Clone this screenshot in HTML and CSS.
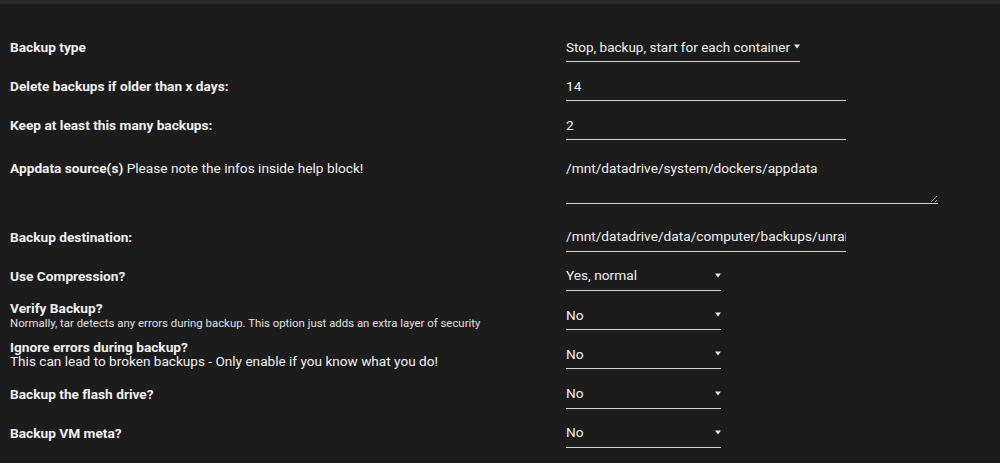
FILE: index.html
```html
<!DOCTYPE html>
<html lang="en">
<head>
    <meta charset="UTF-8">
    <meta name="viewport" content="width=device-width, initial-scale=1.0">
    <title>Backup settings</title>
    <link rel="stylesheet" href="styles.css">
</head>
<body>

    <div class="top-bar"></div>

    <form class="settings">
        <div class="label">Backup type</div>
        <div class="field">
            <div class="select select-wide">
                <span>Stop, backup, start for each container</span>
                <svg class="arrow" width="6" height="5" viewBox="0 0 6 5"><path d="M0 0.5H6L3 4.5Z" fill="#e8e8e8"/></svg>
            </div>
        </div>

        <div class="label">Delete backups if older than x days:</div>
        <div class="field"><input class="text-input" type="text" value="14"></div>

        <div class="label">Keep at least this many backups:</div>
        <div class="field"><input class="text-input" type="text" value="2"></div>

        <div class="label label-top">Appdata source(s) <span class="normal">Please note the infos inside help block!</span></div>
        <div class="field field-area"><textarea class="text-area">/mnt/datadrive/system/dockers/appdata</textarea></div>

        <div class="label">Backup destination:</div>
        <div class="field"><input class="text-input" type="text" value="/mnt/datadrive/data/computer/backups/unraid"></div>

        <div class="label">Use Compression?</div>
        <div class="field">
            <div class="select">
                <span>Yes, normal</span>
                <svg class="arrow" width="6" height="5" viewBox="0 0 6 5"><path d="M0 0.5H6L3 4.5Z" fill="#e8e8e8"/></svg>
            </div>
        </div>

        <div class="label">
            Verify Backup?
            <div class="hint">Normally, tar detects any errors during backup. This option just adds an extra layer of security</div>
        </div>
        <div class="field">
            <div class="select">
                <span>No</span>
                <svg class="arrow" width="6" height="5" viewBox="0 0 6 5"><path d="M0 0.5H6L3 4.5Z" fill="#e8e8e8"/></svg>
            </div>
        </div>

        <div class="label label-tight">
            Ignore errors during backup?
            <div class="hint-big">This can lead to broken backups - Only enable if you know what you do!</div>
        </div>
        <div class="field">
            <div class="select">
                <span>No</span>
                <svg class="arrow" width="6" height="5" viewBox="0 0 6 5"><path d="M0 0.5H6L3 4.5Z" fill="#e8e8e8"/></svg>
            </div>
        </div>

        <div class="label">Backup the flash drive?</div>
        <div class="field">
            <div class="select">
                <span>No</span>
                <svg class="arrow" width="6" height="5" viewBox="0 0 6 5"><path d="M0 0.5H6L3 4.5Z" fill="#e8e8e8"/></svg>
            </div>
        </div>

        <div class="label">Backup VM meta?</div>
        <div class="field">
            <div class="select">
                <span>No</span>
                <svg class="arrow" width="6" height="5" viewBox="0 0 6 5"><path d="M0 0.5H6L3 4.5Z" fill="#e8e8e8"/></svg>
            </div>
        </div>
    </form>

</body>
</html>
```

FILE: styles.css
```css
body{
    margin: 0;
    background-color: #1c1c1c;
    color: #f0f0f0;
    font-family: Roboto, "Liberation Sans", sans-serif;
    font-size: 13.7px;
    color-scheme: dark;
}

.top-bar{
    height: 4px;
    background-color: #2a2a2a;
}

.settings{
    display: grid;
    grid-template-columns: 566px 1fr;
    row-gap: 9.2px;
    padding-top: 28px;
}

.label{
    align-self: center;
    padding-left: 10px;
    font-weight: bold;
    line-height: 16px;
}
.label-top{
    align-self: start;
    padding-top: 10px;
}
.label-tight{
    line-height: 14px;
}
.normal{
    font-weight: normal;
}
.hint{
    font-weight: normal;
    font-size: 11.4px;
    line-height: 14px;
    color: #e0e0e0;
}
.hint-big{
    font-weight: normal;
    font-size: 13.6px;
    line-height: 15px;
}

.field{
    height: 30px;
}
.field-area{
    height: 54px;
    margin-bottom: 9px;
}

.text-input,
.text-area,
.select{
    box-sizing: border-box;
    background: transparent;
    border: none;
    border-bottom: 1px solid #d4d4d4;
    color: #f0f0f0;
    font-family: Roboto, "Liberation Sans", sans-serif;
    font-size: 13.7px;
    padding: 0;
    outline: none;
}
.text-input{
    width: 280px;
    height: 30px;
}
.text-area{
    width: 372px;
    height: 54px;
    padding-top: 10px;
    line-height: 16px;
    resize: vertical;
    display: block;
}

.select{
    width: 155px;
    height: 30px;
    display: flex;
    align-items: center;
    justify-content: space-between;
    white-space: nowrap;
}
.select-wide{
    width: 234px;
    gap: 2px;
    font-size: 13.5px;
}
.arrow{
    display: block;
    flex-shrink: 0;
}
```
